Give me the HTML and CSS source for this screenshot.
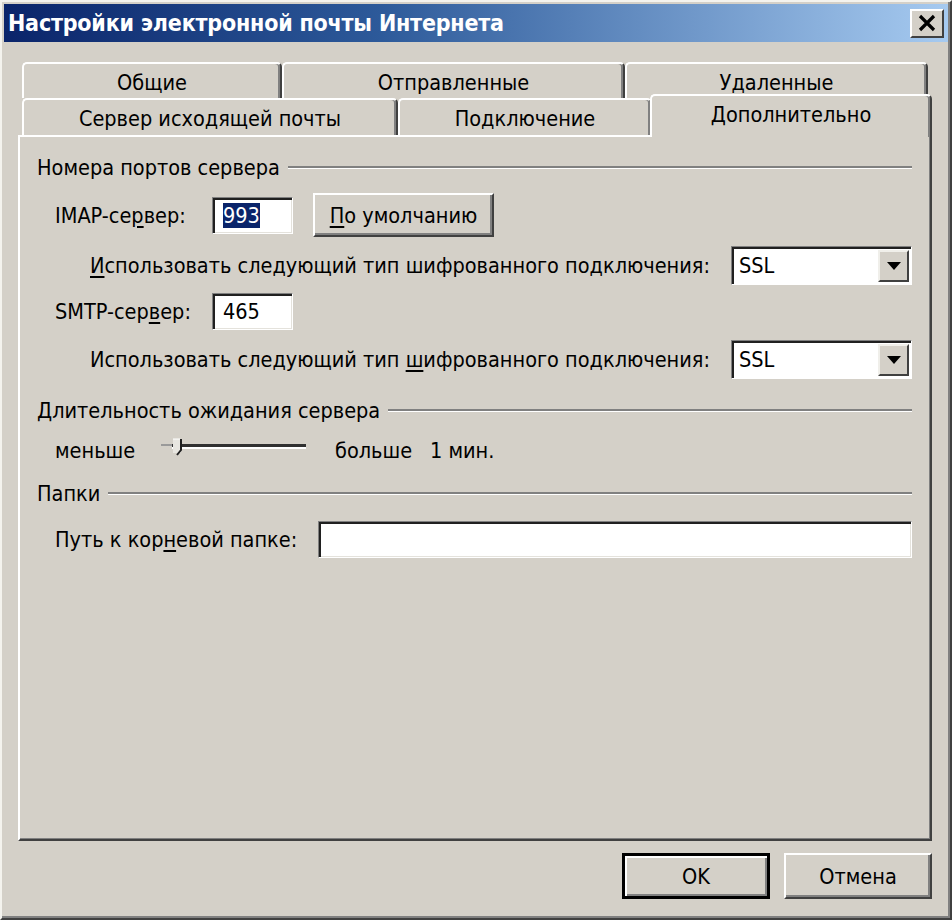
FILE: index.html
```html
<!DOCTYPE html>
<html lang="ru">
<head>
    <meta charset="UTF-8" />
    <title>Настройки электронной почты Интернета</title>
    <link rel="stylesheet" href="styles.css">
</head>
<body>
<div class="window">
    <div class="titlebar">
        <span class="title">Настройки электронной почты Интернета</span>
        <button class="close" aria-label="Закрыть">
            <svg width="22" height="18" viewBox="0 0 22 18">
                <path d="M4 2 L18 16 M18 2 L4 16" stroke="#000" stroke-width="3.2" fill="none" />
            </svg>
        </button>
    </div>

    <div class="content">
        <div class="tabs">
            <div class="tab-row back">
                <div class="tab t-general">Общие</div>
                <div class="tab t-sent">Отправленные</div>
                <div class="tab t-deleted">Удаленные</div>
            </div>
            <div class="tab-row front">
                <div class="tab t-smtp">Сервер исходящей почты</div>
                <div class="tab t-conn">Подключение</div>
                <div class="tab active">Дополнительно</div>
            </div>
        </div>

        <div class="panel">
            <div class="group-title g-ports">
                <span>Номера портов сервера</span>
                <i class="rule"></i>
            </div>

            <div class="row r-imap">
                <label class="lbl lbl-port">IMAP-се<u>р</u>вер:</label>
                <div class="field port"><span class="selected">993</span></div>
                <div class="btn btn-default"><u>П</u>о умолчанию</div>
            </div>

            <div class="row r-enc">
                <label class="lbl lbl-enc"><u>И</u>спользовать следующий тип шифрованного подключения:</label>
                <div class="combo">
                    <span class="combo-value">SSL</span>
                    <span class="combo-drop">
                        <svg width="14" height="8" viewBox="0 0 14 8"><path d="M0 0 H14 L7 8 Z" fill="#000" /></svg>
                    </span>
                </div>
            </div>

            <div class="row r-smtp">
                <label class="lbl lbl-port">SMTP-сер<u>в</u>ер:</label>
                <div class="field port"><span>465</span></div>
            </div>

            <div class="row r-enc r-enc2">
                <label class="lbl lbl-enc">Использовать следующий тип <u>ш</u>ифрованного подключения:</label>
                <div class="combo">
                    <span class="combo-value">SSL</span>
                    <span class="combo-drop">
                        <svg width="14" height="8" viewBox="0 0 14 8"><path d="M0 0 H14 L7 8 Z" fill="#000" /></svg>
                    </span>
                </div>
            </div>

            <div class="group-title g-timeout">
                <span><u>Д</u>лительность ожидания сервера</span>
                <i class="rule"></i>
            </div>

            <div class="row r-slider">
                <span class="lbl s-less">меньше</span>
                <div class="slider">
                    <svg width="148" height="24" viewBox="0 0 148 24">
                        <path d="M1 10 H12" stroke="#9a9a9a" stroke-width="2" />
                        <rect x="12" y="9" width="134" height="3" fill="#303030" />
                        <rect x="12" y="12" width="134" height="2" fill="#ffffff" />
                        <rect x="13" y="4" width="8" height="14" fill="#e8e6e0" />
                        <path d="M21 4 V15 L17 20" stroke="#202020" stroke-width="2" fill="none" />
                        <path d="M13 4 H20" stroke="#ffffff" stroke-width="1" />
                    </svg>
                </div>
                <span class="lbl s-more">больше</span>
                <span class="lbl s-val">1 мин.</span>
            </div>

            <div class="group-title g-folders">
                <span>Папки</span>
                <i class="rule"></i>
            </div>

            <div class="row r-path">
                <label class="lbl lbl-path">Путь к кор<u>н</u>евой папке:</label>
                <div class="field path"></div>
            </div>
        </div>

        <div class="footer">
            <button class="btn btn-ok">OK</button>
            <button class="btn btn-cancel">Отмена</button>
        </div>
    </div>
</div>
</body>
</html>
```

FILE: styles.css
```css
:root {
    --face: #d4d0c8;
    --light: #ffffff;
    --shadow: #808080;
    --dark: #404040;
    --ui-font: "DejaVu Sans Condensed", "DejaVu Sans", sans-serif;
}

* {
    box-sizing: border-box;
}

body {
    margin: 0;
    background: var(--face);
    font-family: var(--ui-font);
    font-size: 21.5px;
    color: #000;
}

u {
    text-decoration-thickness: 2px;
    text-underline-offset: 3px;
}

.window {
    width: 952px;
    height: 920px;
    padding: 2px;
    background: var(--face);
    border: 2px solid;
    border-color: #f4f3ee var(--dark) var(--dark) #f4f3ee;
    box-shadow: inset -2px -2px var(--shadow);
}

.titlebar {
    height: 38px;
    display: flex;
    align-items: center;
    justify-content: space-between;
    padding: 0 4px 0 4px;
    background: linear-gradient(to right, #0a246a 0%, #2d5a9a 40%, #a6caf0 100%);
}

.title {
    color: #fff;
    font-weight: bold;
    font-size: 23px;
    letter-spacing: -0.2px;
}

.close {
    width: 34px;
    height: 29px;
    padding: 0;
    display: flex;
    align-items: center;
    justify-content: center;
    background: var(--face);
    border: 2px solid;
    border-color: var(--light) var(--dark) var(--dark) var(--light);
}

.content {
    padding: 20px 16px 0 14px;
}

/* tabs */

.tab-row {
    display: flex;
    padding-left: 4px;
}

.tab-row.back {
    height: 36px;
}

.tab-row.front {
    height: 37px;
    align-items: flex-end;
}

.tab {
    height: 100%;
    display: flex;
    align-items: center;
    justify-content: center;
    background: var(--face);
    border-style: solid;
    border-width: 2px 2px 0 2px;
    border-color: var(--light) var(--dark) var(--face) var(--light);
    border-radius: 5px 5px 0 0;
    box-shadow: inset -2px 0 var(--shadow);
    padding-top: 2px;
}

.t-general { width: 260px; }
.t-sent { width: 343px; }
.t-deleted { width: 303px; }
.t-smtp { width: 376px; }
.t-conn { width: 254px; }

.tab.active {
    position: relative;
    z-index: 1;
    width: 282px;
    height: 43px;
    margin: -4px 0 -2px -2px;
    padding-top: 0;
    padding-bottom: 5px;
}

/* panel */

.panel {
    height: 706px;
    padding: 16px 18px 0 17px;
    border: 2px solid;
    border-color: var(--light) var(--dark) var(--dark) var(--light);
    box-shadow: inset -1px -1px var(--shadow);
}

.group-title {
    height: 28px;
    display: flex;
    align-items: center;
}

.rule {
    flex: 1;
    height: 3px;
    margin-left: 8px;
    border-top: 2px solid var(--shadow);
    border-bottom: 1px solid var(--light);
}

.g-timeout { margin-top: 17px; }
.g-folders { margin-top: 15px; }

.row {
    display: flex;
    align-items: center;
}

.lbl {
    white-space: nowrap;
}

.field {
    background: #fff;
    border: 1px solid;
    border-color: var(--shadow) var(--light) var(--light) var(--shadow);
    box-shadow: inset 2px 2px #202020, inset -1px -1px #e4e2dc;
    display: flex;
    align-items: center;
    padding-left: 10px;
}

.r-imap {
    height: 46px;
    margin-top: 11px;
}

.r-smtp {
    height: 38px;
    margin-top: 7px;
}

.lbl-port {
    width: 175px;
    padding-left: 18px;
}

.port {
    width: 81px;
    height: 37px;
}

.selected {
    background: #0a246a;
    color: #fff;
}

.btn {
    display: flex;
    align-items: center;
    justify-content: center;
    font-family: var(--ui-font);
    font-size: 21.5px;
    color: #000;
    background: var(--face);
    border: 2px solid;
    border-color: var(--light) var(--dark) var(--dark) var(--light);
    box-shadow: inset -2px -2px var(--shadow);
}

.btn-default {
    width: 181px;
    height: 44px;
    margin-left: 20px;
}

.r-enc {
    height: 40px;
    margin-top: 7px;
}

.r-enc2 {
    margin-top: 9px;
}

.lbl-enc {
    padding-left: 53px;
}

.combo {
    margin-left: auto;
    width: 181px;
    height: 39px;
    display: flex;
    align-items: stretch;
    background: #fff;
    border: 1px solid;
    border-color: var(--shadow) var(--light) var(--light) var(--shadow);
    box-shadow: inset 2px 2px #202020;
    padding: 3px 2px 2px 3px;
}

.combo-value {
    flex: 1;
    display: flex;
    align-items: center;
    padding-left: 4px;
}

.combo-drop {
    width: 31px;
    display: flex;
    align-items: center;
    justify-content: center;
    background: var(--face);
    border: 2px solid;
    border-color: #f0efea var(--dark) var(--dark) #f0efea;
}

/* slider */

.r-slider {
    height: 28px;
    margin-top: 12px;
}

.s-less {
    width: 123px;
    padding-left: 18px;
}

.slider {
    width: 148px;
    height: 24px;
    margin-top: -6px;
}

.s-more {
    width: 95px;
    margin-left: 27px;
}

.r-path {
    height: 36px;
    margin-top: 14px;
}

.lbl-path {
    width: 281px;
    padding-left: 18px;
}

.path {
    flex: 1;
    height: 37px;
}

/* footer */

.footer {
    display: flex;
    justify-content: flex-end;
    gap: 14px;
    margin-top: 12px;
}

.footer .btn {
    width: 148px;
    height: 46px;
}

.btn-ok {
    border: 3px solid #000;
    box-shadow: inset 2px 2px var(--light), inset -2px -2px var(--shadow);
}
```
